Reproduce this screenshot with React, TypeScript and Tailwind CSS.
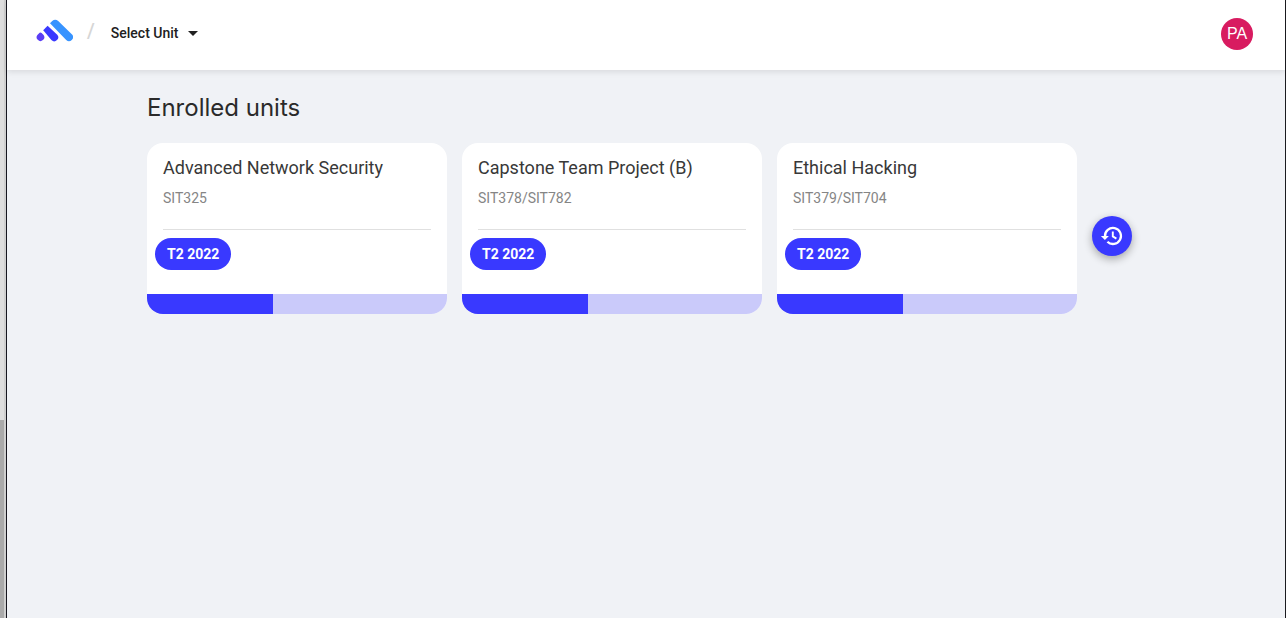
import React from 'react';
import { MdArrowDropDown } from 'react-icons/md';

interface Unit {
  name: string;
  code: string;
  period: string;
  progress: number;
}

const units: Unit[] = [
  { name: 'Advanced Network Security', code: 'SIT325', period: 'T2 2022', progress: 42 },
  { name: 'Capstone Team Project (B)', code: 'SIT378/SIT782', period: 'T2 2022', progress: 42 },
  { name: 'Ethical Hacking', code: 'SIT379/SIT704', period: 'T2 2022', progress: 42 },
];

function Logo() {
  return (
    <svg width="38" height="24" viewBox="0 0 38 24" aria-hidden="true">
      <path d="M2.6 15.7 L4.6 13.7 Q5.7 13 6.6 14 L8.6 16 A3.8 3.8 0 1 1 2.6 15.7 Z" fill="#5a3df5" />
      <path d="M8.2 11.2 L12.6 6.8 L22 15.4 A3.9 3.9 0 0 1 16.4 21 Z" fill="#3939ff" />
      <path d="M15 4.3 L17.2 2.1 Q20.2 -0.4 23.2 2.1 L36.8 15.3 A3.9 3.9 0 0 1 31.2 20.9 Z" fill="#3793ff" />
    </svg>
  );
}

function HistoryIcon() {
  return (
    <svg width="24" height="24" viewBox="0 0 24 24" fill="none" stroke="currentColor" aria-hidden="true">
      <path d="M5 12.5 A8 8 0 1 1 7.4 17.7" strokeWidth="2.3" />
      <path d="M12.8 7.6 V12.4 L16.4 14.6" strokeWidth="1.9" />
      <path d="M0.9 12 H8.9 L4.9 16 Z" fill="currentColor" stroke="none" />
    </svg>
  );
}

function Header() {
  return (
    <header className="relative flex h-[70px] shrink-0 items-center justify-between bg-white pr-8 pb-0.5 pl-7 shadow-[0_2px_6px_rgba(0,0,0,0.1)]">
      <nav className="flex items-center pb-0.5">
        <a href="#home" aria-label="Home" className="mb-1 block">
          <Logo />
        </a>
        <span className="ml-3.5 pb-1 text-xl leading-6 font-medium text-[#d6d6d6]">/</span>
        <button type="button" className="ml-4 flex items-center gap-0.5 text-sm font-medium text-[#212121]">
          Select Unit
          <MdArrowDropDown className="size-6" />
        </button>
      </nav>
      <button
        type="button"
        className="flex size-8 items-center justify-center rounded-full bg-[#d81b60] font-['Liberation_Sans',sans-serif] text-base text-white"
      >
        PA
      </button>
    </header>
  );
}

function UnitCard({ unit }: { unit: Unit }) {
  return (
    <article className="w-[300px] overflow-hidden rounded-2xl bg-white">
      <div className="px-4 pt-[11px]">
        <h2 className="text-lg leading-7 text-[#383838]">{unit.name}</h2>
        <p className="mt-1 text-sm leading-6 text-[#858585]">{unit.code}</p>
        <hr className="mt-[19px] border-[#e0e0e0]" />
      </div>
      <div className="px-2 pt-2 pb-6">
        <span className="inline-flex h-8 items-center rounded-full bg-[#3939ff] px-3 text-sm font-bold text-white">
          {unit.period}
        </span>
      </div>
      <div
        role="progressbar"
        aria-label={unit.name}
        aria-valuenow={unit.progress}
        aria-valuemin={0}
        aria-valuemax={100}
        className="h-5 bg-[#cacafa]"
      >
        <div className="h-full bg-[#3939ff]" style={{ width: `${unit.progress}%` }} />
      </div>
    </article>
  );
}

export default function App() {
  return (
    <div className="flex min-h-screen bg-[#f0f2f6] font-['Roboto',sans-serif]">
      <div className="flex w-[7px] shrink-0 border-r border-[#16161f] bg-[#cfcfcf]">
        <div className="flex w-1 flex-col bg-[#dedede]">
          <div className="grow-[420]" />
          <div className="grow-[198] bg-[#aaaaaa]" />
        </div>
      </div>
      <div className="flex min-w-0 grow flex-col border-r border-[#1b1b20]">
        <Header />
        <main className="px-[140px] pt-5">
          <h1 className="font-['Inter',sans-serif] text-2xl leading-9 text-[#2a2a2a]">Enrolled units</h1>
          <section className="mt-[17px] flex flex-wrap items-center gap-[15px]">
            {units.map((unit) => (
              <UnitCard key={unit.code} unit={unit} />
            ))}
            <button
              type="button"
              aria-label="Past units"
              className="mt-3.5 flex size-10 items-center justify-center rounded-full bg-[#3939ff] text-white shadow-[0_3px_8px_rgba(0,0,0,0.32)]"
            >
              <HistoryIcon />
            </button>
          </section>
        </main>
      </div>
    </div>
  );
}
